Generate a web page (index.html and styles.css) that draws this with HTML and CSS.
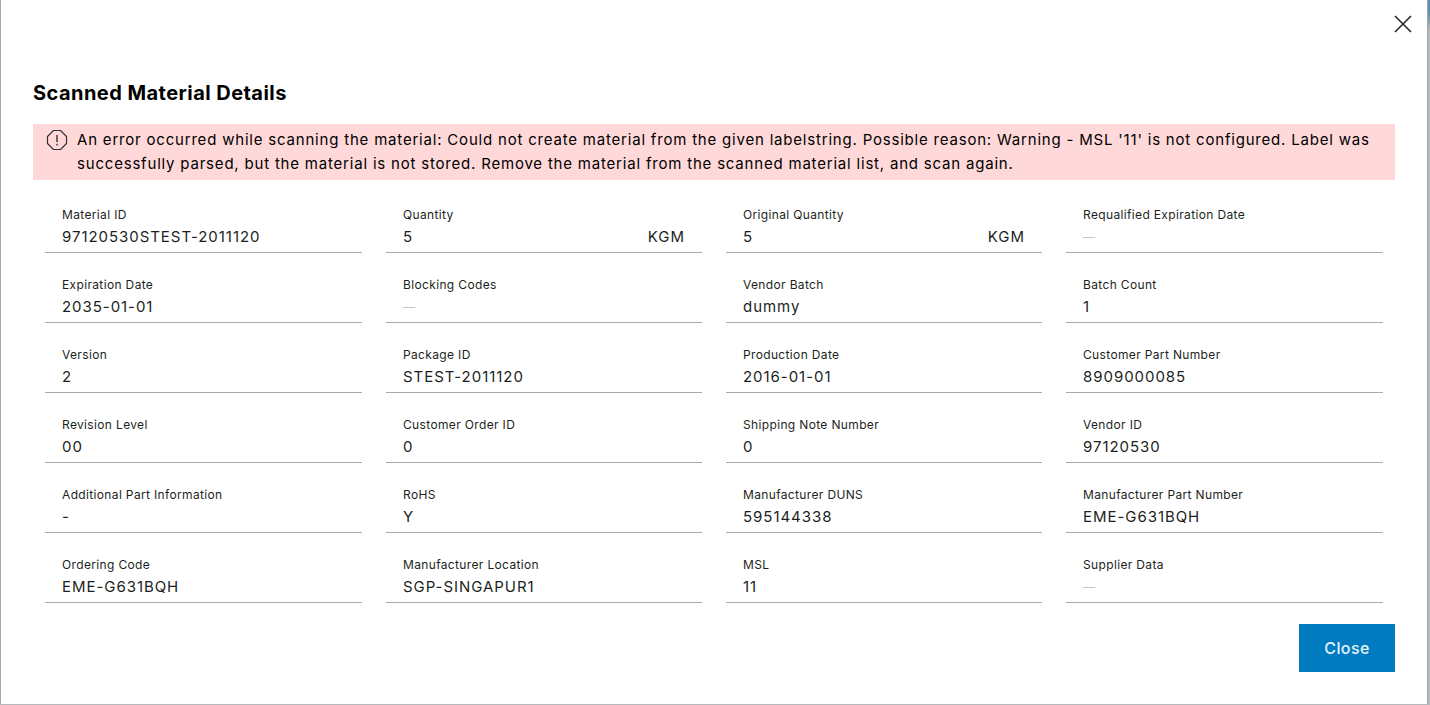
FILE: index.html
```html
<!DOCTYPE html>
<html lang="en">
<head>
    <meta charset="UTF-8">
    <title>Scanned Material Details</title>
    <link rel="stylesheet" href="styles.css">
</head>
<body>
    <div class="dialog">
        <div class="dialog-top">
            <a href="javascript:;" class="close-x">
                <svg width="18" height="18" viewBox="0 0 18 18"><path d="M1 1L17 17M17 1L1 17" fill="none" stroke="#23272b" stroke-width="1.6"/></svg>
            </a>
        </div>
        <h1 class="dialog-title">Scanned Material Details</h1>
        <div class="alert">
            <svg class="alert-icon" width="22" height="22" viewBox="0 0 22 22"><path d="M7.500 1.500H14.500L20.500 7.500V14.500L14.500 20.500H7.500L1.500 14.500V7.500Z" fill="none" stroke="#333" stroke-width="1.200" stroke-linejoin="round"/><path d="M11 6V13M11 14.800V16.600" fill="none" stroke="#333" stroke-width="1.400"/></svg>
            <p>An error occurred while scanning the material: Could not create material from the given labelstring. Possible reason: Warning - MSL '11' is not configured. Label was successfully parsed, but the material is not stored. Remove the material from the scanned material list, and scan again.</p>
        </div>
        <div class="fields">
            <div class="field"><label>Material ID</label><div class="value">97120530STEST-2011120</div></div>
            <div class="field"><label>Quantity</label><div class="value"><span>5</span><span>KGM</span></div></div>
            <div class="field"><label>Original Quantity</label><div class="value"><span>5</span><span>KGM</span></div></div>
            <div class="field"><label>Requalified Expiration Date</label><div class="value empty">—</div></div>

            <div class="field"><label>Expiration Date</label><div class="value">2035-01-01</div></div>
            <div class="field"><label>Blocking Codes</label><div class="value empty">—</div></div>
            <div class="field"><label>Vendor Batch</label><div class="value">dummy</div></div>
            <div class="field"><label>Batch Count</label><div class="value">1</div></div>

            <div class="field"><label>Version</label><div class="value">2</div></div>
            <div class="field"><label>Package ID</label><div class="value">STEST-2011120</div></div>
            <div class="field"><label>Production Date</label><div class="value">2016-01-01</div></div>
            <div class="field"><label>Customer Part Number</label><div class="value">8909000085</div></div>

            <div class="field"><label>Revision Level</label><div class="value">00</div></div>
            <div class="field"><label>Customer Order ID</label><div class="value">0</div></div>
            <div class="field"><label>Shipping Note Number</label><div class="value">0</div></div>
            <div class="field"><label>Vendor ID</label><div class="value">97120530</div></div>

            <div class="field"><label>Additional Part Information</label><div class="value">-</div></div>
            <div class="field"><label>RoHS</label><div class="value">Y</div></div>
            <div class="field"><label>Manufacturer DUNS</label><div class="value">595144338</div></div>
            <div class="field"><label>Manufacturer Part Number</label><div class="value">EME-G631BQH</div></div>

            <div class="field"><label>Ordering Code</label><div class="value">EME-G631BQH</div></div>
            <div class="field"><label>Manufacturer Location</label><div class="value">SGP-SINGAPUR1</div></div>
            <div class="field"><label>MSL</label><div class="value">11</div></div>
            <div class="field"><label>Supplier Data</label><div class="value empty">—</div></div>
        </div>
        <div class="dialog-actions">
            <a href="javascript:;" class="btn-close">Close</a>
        </div>
    </div>
</body>
</html>
```

FILE: styles.css
```css
* {
    margin: 0;
    padding: 0;
    box-sizing: border-box;
}
html, body {
    height: 100%;
    overflow: hidden;
}
body {
    background: linear-gradient(#5f8fae 0, #5f8fae 12px, #b7baba 30px);
    font-family: "Inter", "Liberation Sans", sans-serif;
    color: #000000;
}
a {
    text-decoration: none;
}
.dialog {
    width: 1428px;
    height: 704px;
    background: #ffffff;
    border-left: 1px solid #a4a8ac;
    border-right: 1px solid #a4a8ac;
    padding: 0 32px;
    display: flex;
    flex-direction: column;
}
.dialog-top {
    height: 79px;
    display: flex;
    justify-content: flex-end;
    padding-top: 15px;
    margin-right: -17px;
}
.close-x {
    width: 18px;
    height: 18px;
    display: block;
}
.dialog-title {
    font-size: 20px;
    line-height: 28px;
    font-weight: 700;
    letter-spacing: 0.45px;
    height: 45px;
}
.alert {
    display: flex;
    align-items: flex-start;
    background: #ffd9d9;
    padding: 4px 12px 0 13px;
    height: 56px;
    gap: 9px;
}
.alert-icon {
    flex: none;
    margin-top: 1px;
}
.alert p {
    font-size: 15px;
    line-height: 24px;
    letter-spacing: 0.8px;
}
.fields {
    display: grid;
    grid-template-columns: 317px 316px 316px 317px;
    column-gap: 24px;
    padding: 0 12px;
    margin-top: 3px;
}
.field {
    height: 70px;
    padding: 25px 0 0 17px;
    border-bottom: 1px solid #a4abb3;
}
.field label {
    display: block;
    font-size: 12px;
    line-height: 14px;
    letter-spacing: 0.35px;
    color: #1c1f22;
}
.value {
    display: flex;
    justify-content: space-between;
    font-size: 15px;
    line-height: 22px;
    letter-spacing: 0.95px;
    padding-right: 17px;
    margin-top: 4px;
    color: #1c1f22;
}
.value.empty {
    color: #c4c8cc;
    font-size: 12px;
}
.dialog-actions {
    display: flex;
    justify-content: flex-end;
    margin-top: 21px;
}
.btn-close {
    display: block;
    width: 96px;
    height: 48px;
    background: #007bc0;
    color: #e4f3fb;
    font-size: 16px;
    font-weight: 500;
    letter-spacing: 0.4px;
    line-height: 48px;
    text-align: center;
}
```
